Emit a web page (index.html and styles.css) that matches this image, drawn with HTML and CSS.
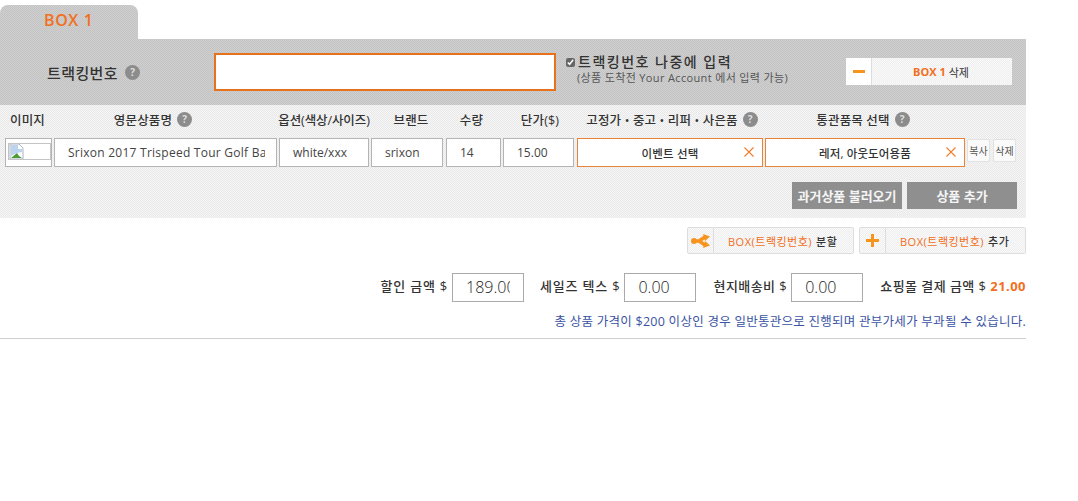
FILE: index.html
```html
<!DOCTYPE html>
<html lang="ko">
<head>
<meta charset="utf-8">
<title>BOX 1</title>
<link rel="stylesheet" href="styles.css">
</head>
<body>
<main class="page">
  <div class="tab">BOX 1</div>
  <section class="track">
    <div class="track-label">트랙킹번호 <span class="help">?</span></div>
    <input class="track-input" type="text">
    <div class="later">
      <div class="later-main"><input class="later-check" type="checkbox" checked>트랙킹번호 나중에 입력</div>
      <div class="later-sub">(상품 도착전 Your Account 에서 입력 가능)</div>
    </div>
    <div class="btn-del">
      <span class="btn-del-icon"><svg width="12" height="3" viewBox="0 0 12 3"><rect width="12" height="3" fill="#f7941d"/></svg></span>
      <span class="btn-del-text"><b class="orange">BOX 1</b> 삭제</span>
    </div>
  </section>
  <section class="items">
    <div class="head">
      <div class="h h-img">이미지</div>
      <div class="h h-name">영문상품명 <span class="help">?</span></div>
      <div class="h h-opt">옵션(색상/사이즈)</div>
      <div class="h h-brand">브랜드</div>
      <div class="h h-qty">수량</div>
      <div class="h h-price">단가($)</div>
      <div class="h h-event">고정가 • 중고 • 리퍼 • 사은품 <span class="help">?</span></div>
      <div class="h h-cat">통관품목 선택 <span class="help">?</span></div>
    </div>
    <div class="row">
      <div class="cell c-img"><span class="broken"><svg width="15" height="15" viewBox="0 0 15 15"><path d="M1 0h9l4 4v11H1z" fill="#fff" stroke="#a9b4c4"/><path d="M2 1h7v4h4v3L8 9l-6 3z" fill="#bcd3ee"/><path d="M2 14l6-5 2 3 3 2z" fill="#4f9a35"/></svg></span></div>
      <div class="cell c-name"><span class="clip">Srixon 2017 Trispeed Tour Golf Bag</span></div>
      <div class="cell c-opt">white/xxx</div>
      <div class="cell c-brand">srixon</div>
      <div class="cell c-qty">14</div>
      <div class="cell c-price">15.00</div>
      <div class="sel s-event">이벤트 선택<svg class="x" width="10" height="10" viewBox="0 0 10 10"><path d="M.5.5l9 9M9.5.5l-9 9" stroke="#ef7d2c" stroke-width="1.1" fill="none"/></svg></div>
      <div class="sel s-cat">레저, 아웃도어용품<svg class="x" width="10" height="10" viewBox="0 0 10 10"><path d="M.5.5l9 9M9.5.5l-9 9" stroke="#ef7d2c" stroke-width="1.1" fill="none"/></svg></div>
      <div class="mini">복사</div>
      <div class="mini">삭제</div>
    </div>
    <div class="actions">
      <div class="gray-btn">과거상품 불러오기</div>
      <div class="gray-btn">상품 추가</div>
    </div>
  </section>
  <div class="box-btns">
    <div class="btn-box">
      <span class="btn-box-icon"><svg width="20" height="14" viewBox="0 0 20 14"><path d="M3 7h5l6-4M8 7l6 4" stroke="#f7941d" stroke-width="3.4" fill="none"/><path d="M12 0l7 2.5-5 4.5zM12 14l7-2.5-5-4.5z" fill="#f7941d"/><circle cx="3" cy="7" r="3" fill="#f7941d"/></svg></span>
      <span class="btn-box-text"><span class="orange">BOX(트랙킹번호)</span> 분할</span>
    </div>
    <div class="btn-box">
      <span class="btn-box-icon"><svg width="13" height="13" viewBox="0 0 13 13"><path d="M5 0h3v5h5v3H8v5H5V8H0V5h5z" fill="#f7941d"/></svg></span>
      <span class="btn-box-text"><span class="orange">BOX(트랙킹번호)</span> 추가</span>
    </div>
  </div>
  <div class="totals">
    <span class="t-label t-wide">할인 금액 $</span><input class="t-input" type="text" value="189.00">
    <span class="t-label t-wide t-gap">세일즈 텍스 $</span><input class="t-input" type="text" value="0.00">
    <span class="t-label t-gap2">현지배송비 $</span><input class="t-input" type="text" value="0.00">
    <span class="t-label t-final">쇼핑몰 결제 금액 $ <b class="orange">21.00</b></span>
  </div>
  <p class="notice">총 상품 가격이 $200 이상인 경우 일반통관으로 진행되며 관부가세가 부과될 수 있습니다.</p>
</main>
</body>
</html>
```
FILE: styles.css
```css
* { box-sizing: border-box; }
html, body { margin: 0; padding: 0; background: #fff; }
body { font-family: "Open Sans", "Noto Sans CJK KR", sans-serif; font-size: 12px; color: #333; }
.page { width: 1026px; padding-top: 5px; }
.orange { color: #f26f21; }
.tab {
  width: 138px; height: 34px; padding: 2px 0 0 44px;
  border-radius: 8px 8px 0 0;
  background: #c9c9c9 repeating-conic-gradient(#c2c2c2 0 25%, #d0d0d0 0 50%) 0 0 / 2px 2px;
  color: #f26f21; font-size: 16px; font-weight: 600; line-height: 26px; letter-spacing: .6px;
}
.track {
  display: flex; align-items: center; height: 66px;
  background: #c9c9c9 repeating-conic-gradient(#c2c2c2 0 25%, #d0d0d0 0 50%) 0 0 / 2px 2px;
}
.track-label { width: 214px; padding-left: 47px; font-size: 15px; font-weight: 500; letter-spacing: .4px; color: #333; display: flex; align-items: center; gap: 7px; }
.help {
  display: inline-flex; align-items: center; justify-content: center;
  width: 15px; height: 15px; border-radius: 50%;
  background: #8c8c8c; color: #ddd; font-size: 10px; font-weight: 700; line-height: 1; letter-spacing: 0;
}
.track-input { width: 342px; height: 38px; margin: 0; border: 2px solid #e8711d; background: #fff; outline: 0; }
.later { width: 282px; margin-left: 8px; align-self: flex-start; padding-top: 14px; }
.later-main { display: flex; align-items: center; font-size: 14px; font-weight: 500; letter-spacing: 1.5px; line-height: 18px; color: #333; }
.later-check { width: 9px; height: 9px; margin: 0 3px 0 2px; accent-color: #666; }
.later-sub { padding-left: 13px; font-size: 11px; letter-spacing: .35px; line-height: 14px; color: #555; }
.btn-del { display: flex; height: 27px; width: 166px; margin-top: -1px; }
.btn-del-icon { width: 26px; padding-left: 1px; display: flex; align-items: center; justify-content: center; background: #fff; border-right: 1px solid #ddd; }
.btn-del-text {
  flex: 1; display: flex; align-items: center; justify-content: center; gap: 3px; font-size: 11px; padding-right: 2px;
  background: #f4f4f4 repeating-conic-gradient(#eee 0 25%, #fafafa 0 50%) 0 0 / 2px 2px;
}
.btn-del-text b { font-weight: 700; }
.items {
  height: 113px;
  background: #efefef repeating-conic-gradient(#e8e8e8 0 25%, #f6f6f6 0 50%) 0 0 / 2px 2px;
}
.head { display: flex; height: 33px; padding-left: 5px; gap: 2px; align-items: center; padding-bottom: 5px; }
.h { display: flex; justify-content: center; align-items: center; gap: 5px; font-size: 12.5px; font-weight: 500; letter-spacing: .15px; color: #333; white-space: nowrap; }
.row { display: flex; height: 29px; padding-left: 5px; gap: 2px; }
.h-img, .c-img { width: 47px; }
.h-img { justify-content: flex-start; padding-left: 5px; }
.h-name, .c-name { width: 223px; }
.h-name { padding-right: 25px; }
.h-opt, .c-opt { width: 90px; }
.h-opt { letter-spacing: -.1px; }
.h-brand, .c-brand { width: 72px; }
.h-brand { padding-left: 8px; }
.h-qty, .c-qty { width: 55px; margin-left: 1px; }
.h-qty { padding-right: 4px; }
.h-price, .c-price { width: 71px; }
.h-price { padding-left: 3px; }
.h-event, .s-event { width: 186px; margin-left: 1px; }
.h-event { padding-left: 4px; }
.h-cat, .s-cat { width: 200px; }
.h-cat { padding-right: 4px; }
.cell {
  display: flex; align-items: center; padding-left: 13px;
  background: #fff; border: 1px solid #b4b4b4;
  font-size: 12px; color: #444; overflow: hidden; white-space: nowrap;
}
.c-img { padding: 0 0 2px 2px; }
.broken { display: flex; align-items: center; width: 43px; height: 17px; border: 1px solid #c4c4c4; overflow: hidden; }
.clip { display: block; overflow: hidden; width: 197px; letter-spacing: .25px; }
.sel {
  position: relative; display: flex; align-items: center; justify-content: center;
  background: #fff; border: 1px solid #e8833a;
  font-size: 11.5px; font-weight: 500; letter-spacing: .15px; color: #333;
}
.x { position: absolute; right: 8px; top: 8px; }
.mini {
  width: 23px; height: 23px; margin-top: 1px; display: flex; align-items: center; justify-content: center;
  background: #fafafa; border: 1px solid #e2e2e2; border-radius: 2px;
  font-size: 10px; color: #555;
}
.mini + .mini { margin-left: 1px; }
.actions { display: flex; justify-content: flex-end; gap: 5px; padding: 15px 9px 0 0; }
.gray-btn {
  width: 110px; height: 27px; display: flex; align-items: center; justify-content: center;
  background: #8f8f8f; color: #f5f5f5; font-size: 13px; font-weight: 700;
}
.box-btns { display: flex; justify-content: flex-end; gap: 5px; padding-top: 9px; }
.btn-box { display: flex; height: 27px; }
.btn-box-icon {
  width: 27px; display: flex; align-items: center; justify-content: center;
  background: #f4f4f4 repeating-conic-gradient(#eee 0 25%, #fafafa 0 50%) 0 0 / 2px 2px;
  border: 1px solid #ddd; border-radius: 2px 0 0 2px;
}
.btn-box-text {
  width: 140px; display: flex; align-items: center; justify-content: flex-start; gap: 4px; padding-left: 14px;
  background: #f4f4f4 repeating-conic-gradient(#eee 0 25%, #fafafa 0 50%) 0 0 / 2px 2px;
  border: 1px solid #ddd; border-left: 0; border-radius: 0 2px 2px 0;
  font-size: 11px; letter-spacing: .5px; color: #333; font-weight: 500; white-space: nowrap;
}
.btn-box-text .orange { font-weight: 400; }
.totals { display: flex; justify-content: flex-end; align-items: center; height: 30px; margin-top: 18px; }
.t-label { padding-bottom: 3px; font-size: 13px; font-weight: 500; letter-spacing: .45px; color: #333; white-space: nowrap; }
.t-wide { letter-spacing: .8px; }
.t-input {
  width: 72px; height: 29px; margin: 0 0 0 4px; padding: 0 13px;
  border: 1px solid #aaa; background: #fff; outline: 0;
  font: 300 16px "Open Sans", sans-serif; color: #222;
}
.t-gap { margin-left: 16px; }
.t-gap2 { margin-left: 17px; }
.t-final { margin-left: 17px; }
.t-final b { font-weight: 700; }
.notice {
  margin: 0; padding: 9px 0 0; text-align: right; height: 37px;
  border-bottom: 1px solid #cfcfcf;
  font-size: 12.5px; letter-spacing: .26px; color: #3a53a4; white-space: nowrap;
}
```
